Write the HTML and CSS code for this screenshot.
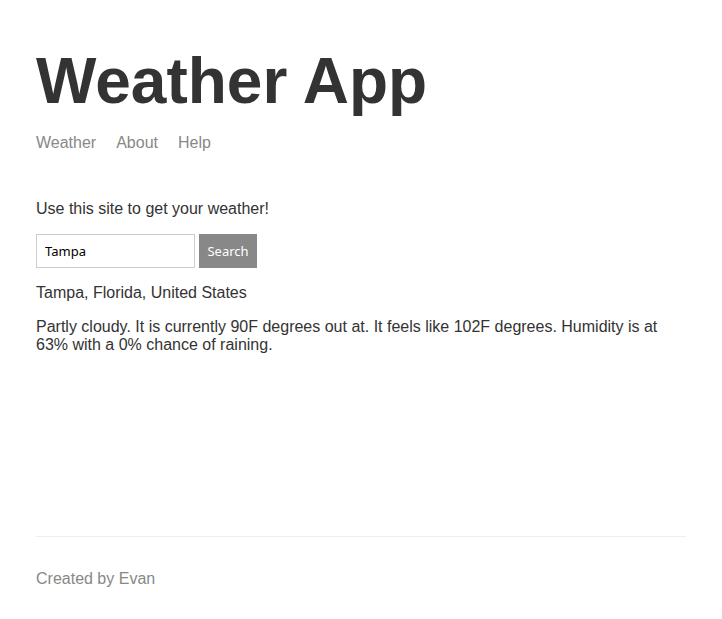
FILE: index.html
```html
<!DOCTYPE html>
<html lang="en">
<head>
<meta charset="utf-8">
<title>Weather App</title>
<link rel="stylesheet" href="styles.css">
</head>
<body>
<div class="page">
  <header class="site-header">
    <h1 class="title">Weather App</h1>
    <nav class="nav">
      <a href="#" class="nav-link">Weather</a>
      <a href="#" class="nav-link">About</a>
      <a href="#" class="nav-link">Help</a>
    </nav>
  </header>
  <main class="main-content">
    <p class="text">Use this site to get your weather!</p>
    <form class="search-form">
      <input class="search-input" type="text" value="Tampa">
      <button class="search-button" type="button">Search</button>
    </form>
    <p class="text">Tampa, Florida, United States</p>
    <p class="text">Partly cloudy. It is currently 90F degrees out at. It feels like 102F degrees. Humidity is at 63% with a 0% chance of raining.</p>
  </main>
  <footer class="site-footer">
    <p class="footer-text">Created by Evan</p>
  </footer>
</div>
</body>
</html>
```
FILE: styles.css
```css
html, body {
  margin: 0;
  padding: 0;
  background: #fff;
}

.page {
  box-sizing: border-box;
  max-width: 682px;
  margin: 0 auto;
  padding: 0 16px;
  min-height: 100vh;
  display: flex;
  flex-direction: column;
  font-family: "Liberation Sans", Arial, sans-serif;
  font-size: 16px;
  color: #333;
}

.site-header {
  padding-top: 44px;
  margin-bottom: 48px;
}

.title {
  margin: 0 0 16px;
  font-size: 64px;
  line-height: 74px;
  font-weight: bold;
  color: #333;
}

.nav {
  display: flex;
  gap: 20px;
  line-height: 18px;
}

.nav-link {
  color: #888;
  text-decoration: none;
}

.main-content {
  flex-grow: 1;
}

.text {
  margin: 0 0 16px;
  line-height: 18px;
}

.search-form {
  display: flex;
  gap: 4px;
  height: 34px;
  margin-bottom: 16px;
}

.search-input {
  box-sizing: border-box;
  width: 159px;
  height: 34px;
  border: 1px solid #ccc;
  padding: 8px;
  font-family: "Noto Sans", "Open Sans", sans-serif;
  font-size: 13px;
  color: #000;
  outline: none;
}

.search-button {
  box-sizing: border-box;
  width: 58px;
  height: 34px;
  border: 1px solid #888;
  background: #888;
  color: #fff;
  padding: 0;
  font-family: "Noto Sans", "Open Sans", sans-serif;
  font-size: 13px;
  cursor: pointer;
}

.site-footer {
  margin-top: 16px;
  border-top: 1px solid #eee;
  padding: 17px 0 15px;
  color: #888;
}

.footer-text {
  margin: 16px 0;
  line-height: 18px;
}
```
